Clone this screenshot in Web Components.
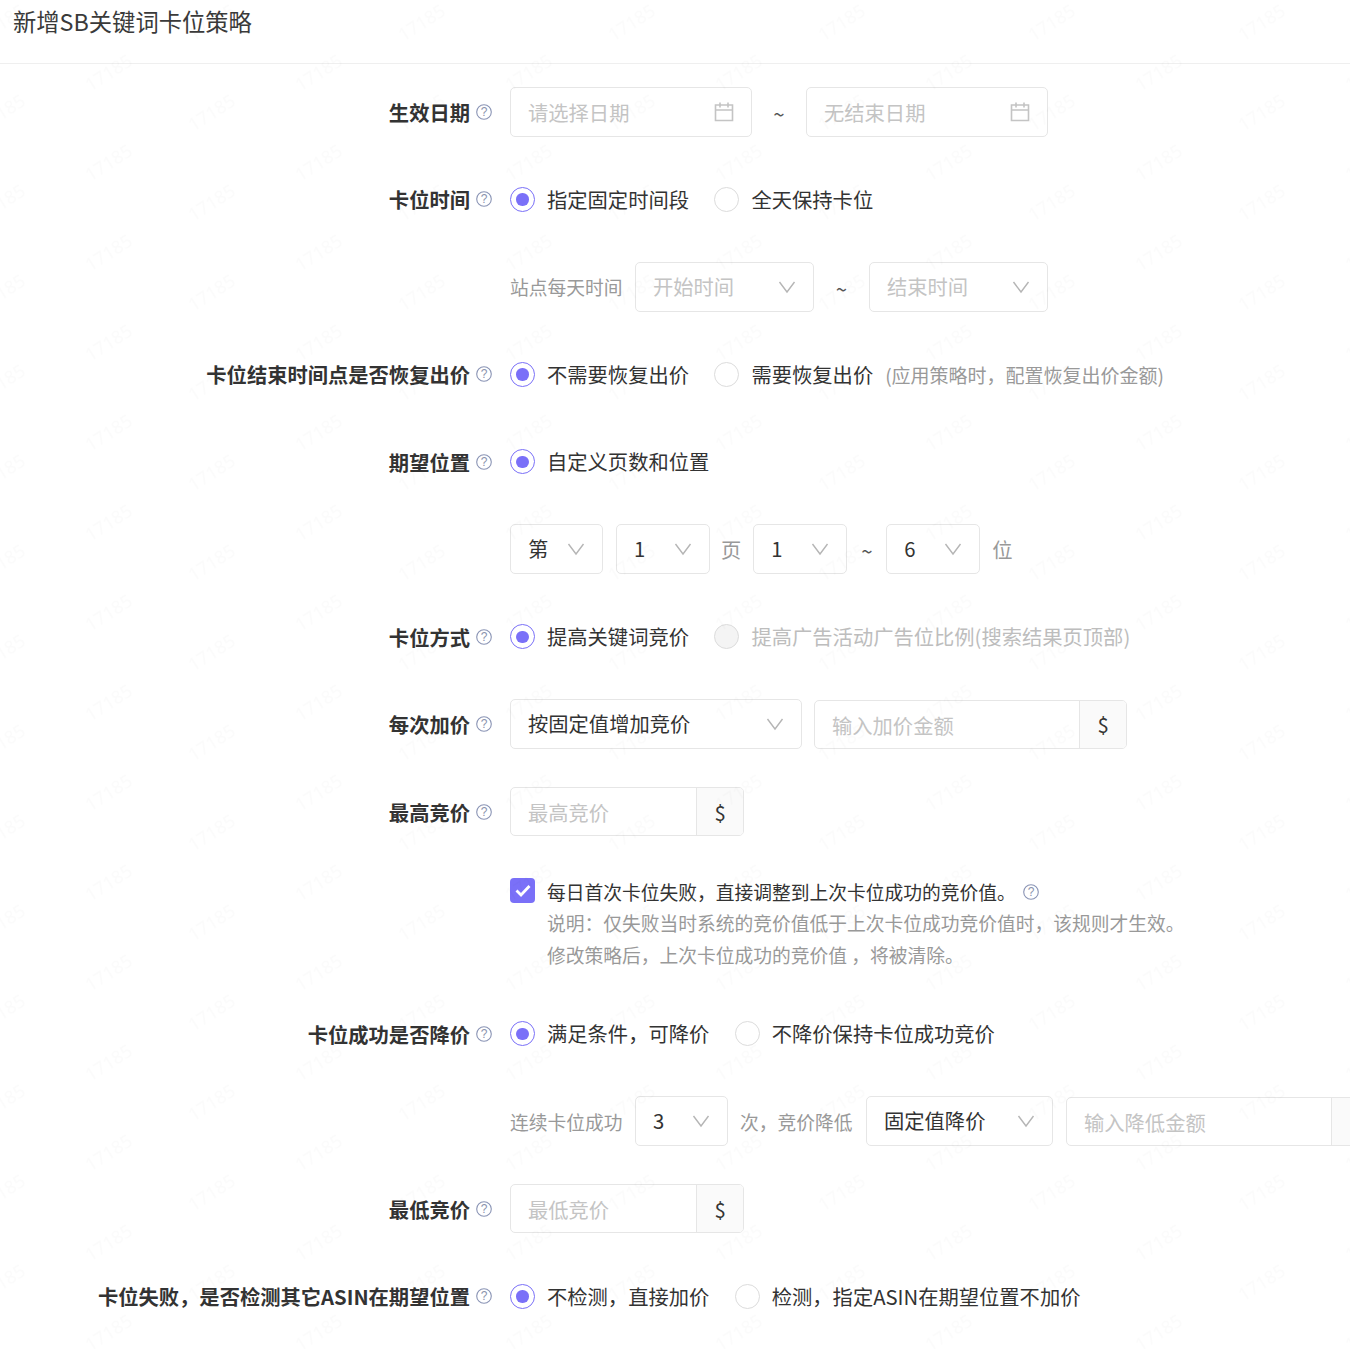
<!DOCTYPE html>
<html lang="zh">
<head>
<meta charset="utf-8">
<title>新增SB关键词卡位策略</title>
<style>
  html, body { margin: 0; padding: 0; background: #fff; overflow: hidden; }
  body { font-family: "Noto Sans CJK SC", "Noto Sans", sans-serif; font-size: 20.3px; color: #333; }
</style>
</head>
<body>
<strategy-page>
  <form-row label="生效日期">
    <date-box placeholder="请选择日期"></date-box>
    <range-sep style="width:54px"></range-sep>
    <date-box placeholder="无结束日期"></date-box>
  </form-row>

  <form-row label="卡位时间">
    <radio-item checked>指定固定时间段</radio-item>
    <radio-item>全天保持卡位</radio-item>
  </form-row>

  <form-row>
    <muted-text style="margin-right:12.5px">站点每天时间</muted-text>
    <select-box placeholder="开始时间" style="width:179px"></select-box>
    <range-sep style="width:55px"></range-sep>
    <select-box placeholder="结束时间" style="width:179px"></select-box>
  </form-row>

  <form-row label="卡位结束时间点是否恢复出价">
    <radio-item checked>不需要恢复出价</radio-item>
    <radio-item>需要恢复出价</radio-item>
    <muted-text style="margin-left:-13.5px;font-size:19px">(应用策略时，配置恢复出价金额)</muted-text>
  </form-row>

  <form-row label="期望位置">
    <radio-item checked>自定义页数和位置</radio-item>
  </form-row>

  <form-row>
    <select-box value="第" style="width:93px;margin-right:13px"></select-box>
    <select-box value="1" style="width:94px"></select-box>
    <muted-text style="margin:0 12px 0 11px;font-size:20.3px">页</muted-text>
    <select-box value="1" style="width:94px"></select-box>
    <range-sep style="width:39px"></range-sep>
    <select-box value="6" style="width:94px"></select-box>
    <muted-text style="margin-left:12px;font-size:20.3px">位</muted-text>
  </form-row>

  <form-row label="卡位方式">
    <radio-item checked>提高关键词竞价</radio-item>
    <radio-item disabled>提高广告活动广告位比例(搜索结果页顶部)</radio-item>
  </form-row>

  <form-row label="每次加价">
    <select-box value="按固定值增加竞价" style="width:292px;margin-right:12px"></select-box>
    <input-group placeholder="输入加价金额" unit="$" style="width:313px"></input-group>
  </form-row>

  <form-row label="最高竞价">
    <input-group placeholder="最高竞价" unit="$" style="width:234px"></input-group>
  </form-row>

  <form-row tall>
    <check-note>
      每日首次卡位失败，直接调整到上次卡位成功的竞价值。
      <span slot="note">说明：仅失败当时系统的竞价值低于上次卡位成功竞价值时，该规则才生效。</span>
      <span slot="note">修改策略后，上次卡位成功的竞价值 ，将被清除。</span>
    </check-note>
  </form-row>

  <form-row label="卡位成功是否降价">
    <radio-item checked>满足条件，可降价</radio-item>
    <radio-item>不降价保持卡位成功竞价</radio-item>
  </form-row>

  <form-row>
    <muted-text style="margin-right:12.5px">连续卡位成功</muted-text>
    <select-box value="3" style="width:93px;margin-right:12px"></select-box>
    <muted-text style="margin-right:13.5px">次，竞价降低</muted-text>
    <select-box value="固定值降价" style="width:187px;margin-right:13px"></select-box>
    <input-group placeholder="输入降低金额" style="width:313px"></input-group>
  </form-row>

  <form-row label="最低竞价">
    <input-group placeholder="最低竞价" unit="$" style="width:234px"></input-group>
  </form-row>

  <form-row label="卡位失败，是否检测其它ASIN在期望位置">
    <radio-item checked>不检测，直接加价</radio-item>
    <radio-item>检测，指定ASIN在期望位置不加价</radio-item>
  </form-row>
</strategy-page>

<script>
const chevron = `<svg width="18" height="18" viewBox="0 0 18 18" fill="none" stroke="#b5b5b5" stroke-width="1.4"><path d="M1.5 4l7.5 10 7.5-10"/></svg>`;

class HelpIcon extends HTMLElement {
  connectedCallback() {
    this.attachShadow({ mode: 'open' });
    this.shadowRoot.innerHTML = `
      <style>
        :host { display: inline-flex; width: 16px; height: 16px; flex: none; }
        svg { display: block; }
        text { font: 12px "Liberation Sans", sans-serif; fill: #8a93ad; }
      </style>
      <svg width="16" height="16" viewBox="0 0 16 16">
        <circle cx="8" cy="8" r="7.3" fill="none" stroke="#8a94b5" stroke-width="1.1"/>
        <text x="8" y="12.3" text-anchor="middle">?</text>
      </svg>
    `;
  }
}
customElements.define('help-icon', HelpIcon);

class StrategyPage extends HTMLElement {
  connectedCallback() {
    this.attachShadow({ mode: 'open' });
    this.shadowRoot.innerHTML = `
      <style>
        :host { display: block; position: relative; height: 1349px; overflow: hidden; }
        header {
          height: 63px;
          border-bottom: 1px solid #efefef;
          padding-left: 13px;
          font-size: 23.3px;
          line-height: 42px;
          color: #3a3a3a;
        }
        main { padding-top: 22.9px; }
        /* watermark lies over the whole form */
        .wm { position: absolute; left: 0; top: 0; width: 100%; height: 100%; pointer-events: none; }
        .wm text { font: 18px "Noto Sans", sans-serif; fill: #000; fill-opacity: .014; text-anchor: middle; }
      </style>
      <header>新增SB关键词卡位策略</header>
      <main><slot></slot></main>
      <svg class="wm" aria-hidden="true">
        <defs>
          <pattern id="wm" width="210" height="90" patternUnits="userSpaceOnUse">
            <text transform="translate(5 28) rotate(-32)">17185</text>
            <text transform="translate(215 28) rotate(-32)">17185</text>
            <text transform="translate(112 78) rotate(-32)">17185</text>
          </pattern>
        </defs>
        <rect width="100%" height="100%" fill="url(#wm)"/>
      </svg>
    `;
  }
}
customElements.define('strategy-page', StrategyPage);

class FormRow extends HTMLElement {
  connectedCallback() {
    const label = this.getAttribute('label');
    this.attachShadow({ mode: 'open' });
    this.shadowRoot.innerHTML = `
      <style>
        :host { display: flex; height: 50px; margin-bottom: 37.5px; align-items: center; white-space: nowrap; }
        :host([tall]) { height: 97px; align-items: flex-start; }
        .label {
          width: 492px;
          margin-right: 18px;
          flex: none;
          display: flex;
          justify-content: flex-end;
          align-items: center;
          gap: 6px;
          font-weight: 700;
          color: #333;
        }
        .control { display: flex; align-items: center; flex: none; }
      </style>
      <div class="label">${label ? `<span>${label}</span><help-icon></help-icon>` : ''}</div>
      <div class="control"><slot></slot></div>
    `;
  }
}
customElements.define('form-row', FormRow);

class RadioItem extends HTMLElement {
  connectedCallback() {
    this.attachShadow({ mode: 'open' });
    this.shadowRoot.innerHTML = `
      <style>
        :host { display: inline-flex; align-items: center; gap: 12px; margin-right: 25px; color: #333; }
        :host([disabled]) { color: #bdbdbd; }
        .dot {
          width: 25px; height: 25px; box-sizing: border-box; flex: none;
          border: 1px solid #dcdcdc; border-radius: 50%; background: #fff;
          display: flex; align-items: center; justify-content: center;
        }
        :host([checked]) .dot { border-color: #7a70f8; }
        :host([checked]) .dot::after { content: ''; width: 12.5px; height: 12.5px; border-radius: 50%; background: #7a70f8; }
        :host([disabled]) .dot { background: #f4f4f4; }
        .txt { margin-top: -1px; margin-right: .5px; }
      </style>
      <span class="dot"></span><span class="txt"><slot></slot></span>
    `;
  }
}
customElements.define('radio-item', RadioItem);

class SelectBox extends HTMLElement {
  connectedCallback() {
    const value = this.getAttribute('value');
    const text = value || this.getAttribute('placeholder');
    this.attachShadow({ mode: 'open' });
    this.shadowRoot.innerHTML = `
      <style>
        :host {
          display: flex; align-items: center; justify-content: space-between; flex: none;
          box-sizing: border-box; height: 50px; padding: 0 17px;
          border: 1px solid #e6e6e6; border-radius: 5px; background: #fff;
        }
        .t { color: ${value ? '#333' : '#c4c4c4'}; margin-top: -2px; }
        svg { display: block; }
      </style>
      <span class="t">${text}</span>${chevron}
    `;
  }
}
customElements.define('select-box', SelectBox);

class DateBox extends HTMLElement {
  connectedCallback() {
    this.attachShadow({ mode: 'open' });
    this.shadowRoot.innerHTML = `
      <style>
        :host {
          display: flex; align-items: center; justify-content: space-between; flex: none;
          box-sizing: border-box; width: 242px; height: 50px; padding: 0 17px 0 17px;
          border: 1px solid #e6e6e6; border-radius: 5px; background: #fff;
        }
        .t { color: #c4c4c4; }
      </style>
      <span class="t">${this.getAttribute('placeholder')}</span>
      <svg width="20" height="20" viewBox="0 0 20 20" fill="none" stroke="#c4c4c4" stroke-width="1.6">
        <path d="M1.5 3h17v15.5h-17zM1.5 8h17M6 .5v5M14 .5v5"/>
      </svg>
    `;
  }
}
customElements.define('date-box', DateBox);

class InputGroup extends HTMLElement {
  connectedCallback() {
    this.attachShadow({ mode: 'open' });
    this.shadowRoot.innerHTML = `
      <style>
        :host {
          display: flex; flex: none; box-sizing: border-box; height: 49px;
          border: 1px solid #e6e6e6; border-radius: 5px; background: #fff; overflow: hidden;
        }
        .t { flex: 1; padding-left: 17px; color: #c4c4c4; line-height: 48px; }
        .addon {
          width: 46.6px; flex: none; box-sizing: border-box;
          border-left: 1px solid #e6e6e6; background: #fafafa; color: #333;
          display: flex; align-items: center; justify-content: center;
        }
      </style>
      <span class="t">${this.getAttribute('placeholder')}</span>
      <span class="addon">${this.getAttribute('unit') || ''}</span>
    `;
  }
}
customElements.define('input-group', InputGroup);

class RangeSep extends HTMLElement {
  connectedCallback() {
    this.attachShadow({ mode: 'open' });
    this.shadowRoot.innerHTML = `
      <style>
        :host { display: block; flex: none; text-align: center; color: #555; font-size: 20.3px; margin-top: 2px; }
      </style>
      ~
    `;
  }
}
customElements.define('range-sep', RangeSep);

class MutedText extends HTMLElement {
  connectedCallback() {
    this.attachShadow({ mode: 'open' });
    this.shadowRoot.innerHTML = `
      <style>:host { display: inline-block; flex: none; color: #999; font-size: 18.75px; }</style>
      <slot></slot>
    `;
  }
}
customElements.define('muted-text', MutedText);

class CheckNote extends HTMLElement {
  connectedCallback() {
    this.attachShadow({ mode: 'open' });
    this.shadowRoot.innerHTML = `
      <style>
        :host { display: flex; gap: 12px; line-height: 32px; padding-top: 2px; font-size: 18.75px; }
        .box {
          width: 25px; height: 25px; margin-top: 2px; flex: none; border-radius: 4px; background: #7a70f8;
          display: flex; align-items: center; justify-content: center;
        }
        .head { display: flex; align-items: center; gap: 7px; color: #333; }
        .notes { color: #999; margin-top: -1px; }
        ::slotted([slot=note]) { display: block; }
      </style>
      <span class="box">
        <svg width="16" height="13" viewBox="0 0 16 13" fill="none" stroke="#fff" stroke-width="2.8"><path d="M1.5 6.5l4.5 4.5 8.5-9"/></svg>
      </span>
      <div>
        <div class="head"><span><slot></slot></span><help-icon></help-icon></div>
        <div class="notes"><slot name="note"></slot></div>
      </div>
    `;
  }
}
customElements.define('check-note', CheckNote);
</script>
</body>
</html>
